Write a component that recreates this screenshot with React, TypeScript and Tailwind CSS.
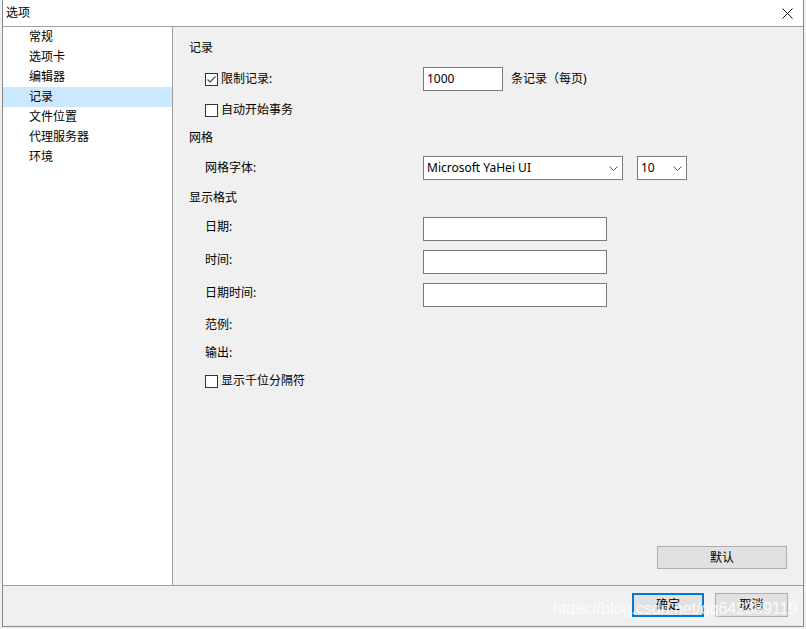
const font = { fontFamily: '"Noto Sans", "Noto Sans CJK SC", sans-serif' };

function Check({ checked = false }: { checked?: boolean }) {
  return (
    <span className="w-[13px] h-[13px] border border-[#333] bg-white flex items-center justify-center shrink-0">
      {checked && (
        <svg width="11" height="11" viewBox="0 0 11 11">
          <path d="M1.5 5.5 L4 8 L9.5 2.5" fill="none" stroke="#444" strokeWidth="1.1" />
        </svg>
      )}
    </span>
  );
}

function Chevron() {
  return (
    <svg width="9" height="5" viewBox="0 0 9 5" className="shrink-0">
      <path d="M0.5 0.5 L4.5 4.5 L8.5 0.5" fill="none" stroke="#555" strokeWidth="1" />
    </svg>
  );
}

const navItems = ["常规", "选项卡", "编辑器", "记录", "文件位置", "代理服务器", "环境"];

export default function App() {
  return (
    <div className="w-[806px] h-[629px] bg-[#f0f0f0] text-[12px] text-black overflow-hidden relative" style={font}>
      {/* ===== WINDOW ===== */}
      <div className="ml-[2px] w-[802px] h-[627px] border-x border-b border-[#8a8a8a] flex flex-col bg-[#f0f0f0]">

        {/* title bar */}
        <div className="h-[27px] bg-white border-b border-[#a0a0a0] flex items-center justify-between shrink-0">
          <span className="pl-[3px] text-[12px]">选项</span>
          <svg width="11" height="11" viewBox="0 0 11 11" className="mr-[10px]">
            <path d="M0.5 0.5 L10.5 10.5 M10.5 0.5 L0.5 10.5" stroke="#111" strokeWidth="1" />
          </svg>
        </div>

        {/* body */}
        <div className="flex h-[558px] shrink-0">
          {/* sidebar */}
          <div className="w-[170px] bg-white border-r border-[#a0a0a0] shrink-0">
            {navItems.map((t) => (
              <div
                key={t}
                className={"h-5 leading-5 pl-[26px] " + (t === "记录" ? "bg-[#cce8ff]" : "")}
              >
                {t}
              </div>
            ))}
          </div>

          {/* content */}
          <div className="flex-1 flex flex-col pl-4 pr-4">
            <div className="h-5 leading-5 mt-[11px]">记录</div>

            <div className="flex items-center h-6 mt-[9px] pl-4">
              <div className="w-[218px] flex items-center gap-[3px]">
                <Check checked />
                <span>限制记录:</span>
              </div>
              <div className="w-[80px] h-6 bg-white border border-[#7a7a7a] px-[3px] leading-[22px]">1000</div>
              <span className="ml-[8px]">条记录（每页)</span>
            </div>

            <div className="flex items-center h-5 mt-[9px] pl-4 gap-[3px]">
              <Check />
              <span>自动开始事务</span>
            </div>

            <div className="h-5 leading-5 mt-[8px]">网格</div>

            <div className="flex items-center h-6 mt-[8px] pl-4">
              <div className="w-[218px]">网格字体:</div>
              <div className="w-[200px] h-6 bg-white border border-[#7a7a7a] pl-[3px] pr-[4px] flex items-center justify-between">
                <span>Microsoft YaHei UI</span>
                <Chevron />
              </div>
              <div className="ml-[14px] w-[50px] h-6 bg-white border border-[#7a7a7a] pl-[3px] pr-[4px] flex items-center justify-between">
                <span>10</span>
                <Chevron />
              </div>
            </div>

            <div className="h-5 leading-5 mt-[8px]">显示格式</div>

            {["日期:", "时间:", "日期时间:"].map((l) => (
              <div key={l} className="flex items-start h-6 pl-4 mt-[9px]">
                <div className="w-[218px] h-5 leading-5">{l}</div>
                <div className="w-[184px] h-6 bg-white border border-[#7a7a7a]"></div>
              </div>
            ))}

            <div className="h-5 leading-5 mt-[8px] pl-4">范例:</div>
            <div className="h-5 leading-5 mt-[8px] pl-4">输出:</div>

            <div className="flex items-center h-5 mt-[8px] pl-4 gap-[3px]">
              <Check />
              <span>显示千位分隔符</span>
            </div>

            <div className="flex-1"></div>
            <div className="flex justify-end mb-[16px]">
              <button className="w-[130px] h-[23px] bg-[#e1e1e1] border border-[#adadad] leading-[21px]">默认</button>
            </div>
          </div>
        </div>

        {/* footer */}
        <div className="flex-1 border-t border-[#a0a0a0] flex justify-end items-start pt-[7px] pr-[15px] gap-[11px]">
          <button className="w-[72px] h-6 bg-[#e1e1e1] border-2 border-[#0078d7] leading-5">确定</button>
          <button className="w-[73px] h-6 bg-[#e1e1e1] border border-[#adadad] leading-[22px]">取消</button>
        </div>
      </div>

      {/* watermark */}
      <div
        className="absolute left-[553px] top-[597px] text-[16px] text-white/80 pointer-events-none whitespace-nowrap"
        style={{ fontFamily: '"Liberation Sans", Arial, sans-serif' }}
      >
        https://blog.csdn.net/qq642389119
      </div>
    </div>
  );
}
